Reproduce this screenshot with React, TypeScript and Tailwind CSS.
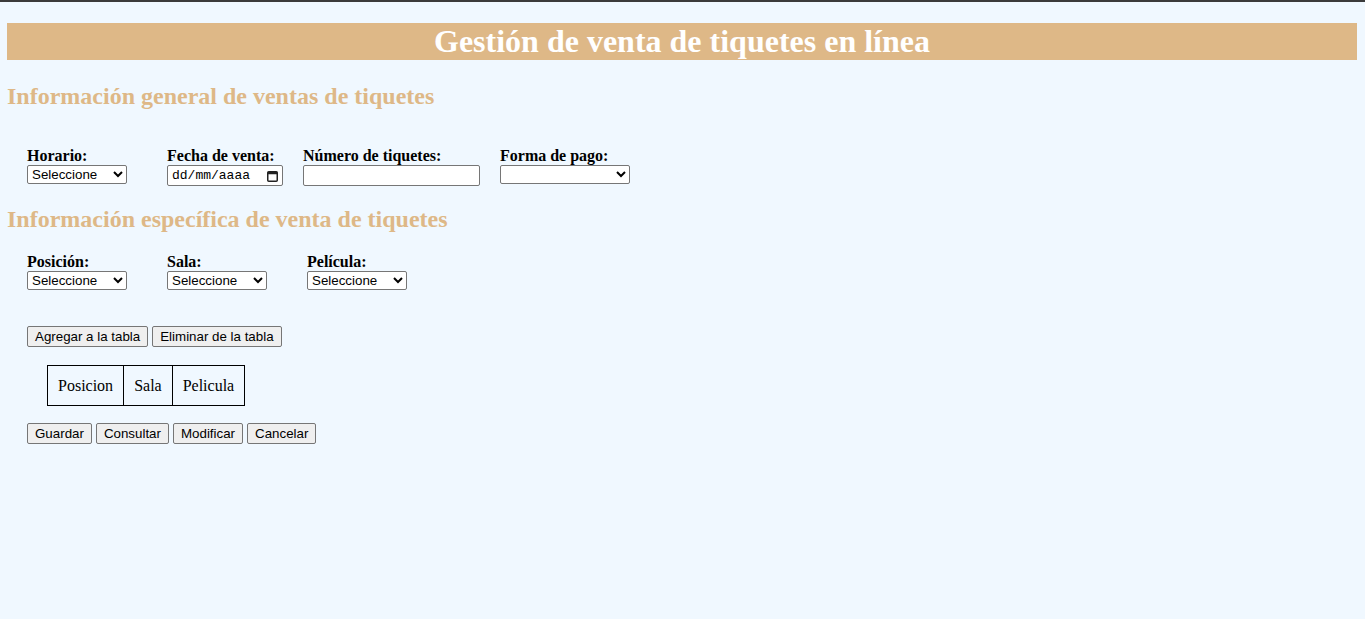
import React from "react";

const serif = { fontFamily: '"Liberation Serif", "Times New Roman", serif' };

function Sel({ w, text }: { w: number; text?: string }) {
  return (
    <select
      className="block h-[19px] border border-[#767676] rounded-[2px] bg-white text-[13.33px] text-black pl-0 font-['Liberation_Sans',Arial,sans-serif]"
      style={{ width: w }}
      defaultValue=""
    >
      <option value="">{text ?? ""}</option>
    </select>
  );
}

function Btn({ children }: { children: React.ReactNode }) {
  return (
    <button className="h-[21px] px-[7px] border border-[#767676] rounded-[2px] bg-[#efefef] text-[13.33px] text-black leading-none font-['Liberation_Sans',Arial,sans-serif]">
      {children}
    </button>
  );
}

function Label({ children }: { children: React.ReactNode }) {
  return <div className="text-[16px] font-bold leading-[18px] text-black">{children}</div>;
}

export default function App() {
  return (
    <div className="min-h-[619px] bg-[#f0f8ff] text-black" style={serif}>
      <div className="h-[2px] bg-[#3b3b3b]" />
      <div className="pl-[7px] pr-[8px]">
        <h1 className="mt-[21px] h-[37px] bg-[#deb887] text-white text-[32px] font-bold leading-[37px] text-center">
          Gestión de venta de tiquetes en línea
        </h1>
        <h2 className="mt-[22px] text-[24px] font-bold leading-[28px] text-[#deb887]">
          Información general de ventas de tiquetes
        </h2>
        <div className="mt-[37px] pl-[20px] flex">
          <div className="w-[140px]">
            <Label>Horario:</Label>
            <Sel w={100} text="Seleccione" />
          </div>
          <div className="w-[136px]">
            <Label>Fecha de venta:</Label>
            <div className="relative w-[116px] h-[21px] border border-[#767676] rounded-[2px] bg-white flex items-center pl-[4px] text-[13px] text-black font-['Liberation_Mono',monospace]">
              <span>dd/mm/aaaa</span>
              <svg className="absolute right-[4px] top-[4px]" width="11" height="12" viewBox="0 0 11 12">
                <rect x="0.75" y="1.75" width="9.5" height="9.5" rx="1" fill="none" stroke="#222" strokeWidth="1.5" />
                <rect x="0.75" y="1.75" width="9.5" height="2.5" fill="#222" />
              </svg>
            </div>
          </div>
          <div className="w-[197px]">
            <Label>Número de tiquetes:</Label>
            <input
              type="text"
              className="block w-[177px] h-[21px] border border-[#767676] rounded-[2px] bg-white text-[13.33px] px-[3px]"
            />
          </div>
          <div>
            <Label>Forma de pago:</Label>
            <Sel w={130} />
          </div>
        </div>
        <h2 className="mt-[19px] text-[24px] font-bold leading-[28px] text-[#deb887]">
          Información específica de venta de tiquetes
        </h2>
        <div className="mt-[20px] pl-[20px] flex">
          <div className="w-[140px]">
            <Label>Posición:</Label>
            <Sel w={100} text="Seleccione" />
          </div>
          <div className="w-[140px]">
            <Label>Sala:</Label>
            <Sel w={100} text="Seleccione" />
          </div>
          <div>
            <Label>Película:</Label>
            <Sel w={100} text="Seleccione" />
          </div>
        </div>
        <div className="mt-[36px] pl-[20px] flex gap-[4px]">
          <Btn>Agregar a la tabla</Btn>
          <Btn>Eliminar de la tabla</Btn>
        </div>
        <div className="mt-[18px] pl-[40px]">
          <table className="border-collapse text-[16px]">
            <tbody>
              <tr>
                <td className="border border-black h-[40px] px-[10px]">Posicion</td>
                <td className="border border-black h-[40px] px-[10px]">Sala</td>
                <td className="border border-black h-[40px] px-[10px]">Pelicula</td>
              </tr>
            </tbody>
          </table>
        </div>
        <div className="mt-[17px] pl-[20px] flex gap-[4px]">
          <Btn>Guardar</Btn>
          <Btn>Consultar</Btn>
          <Btn>Modificar</Btn>
          <Btn>Cancelar</Btn>
        </div>
      </div>
    </div>
  );
}
